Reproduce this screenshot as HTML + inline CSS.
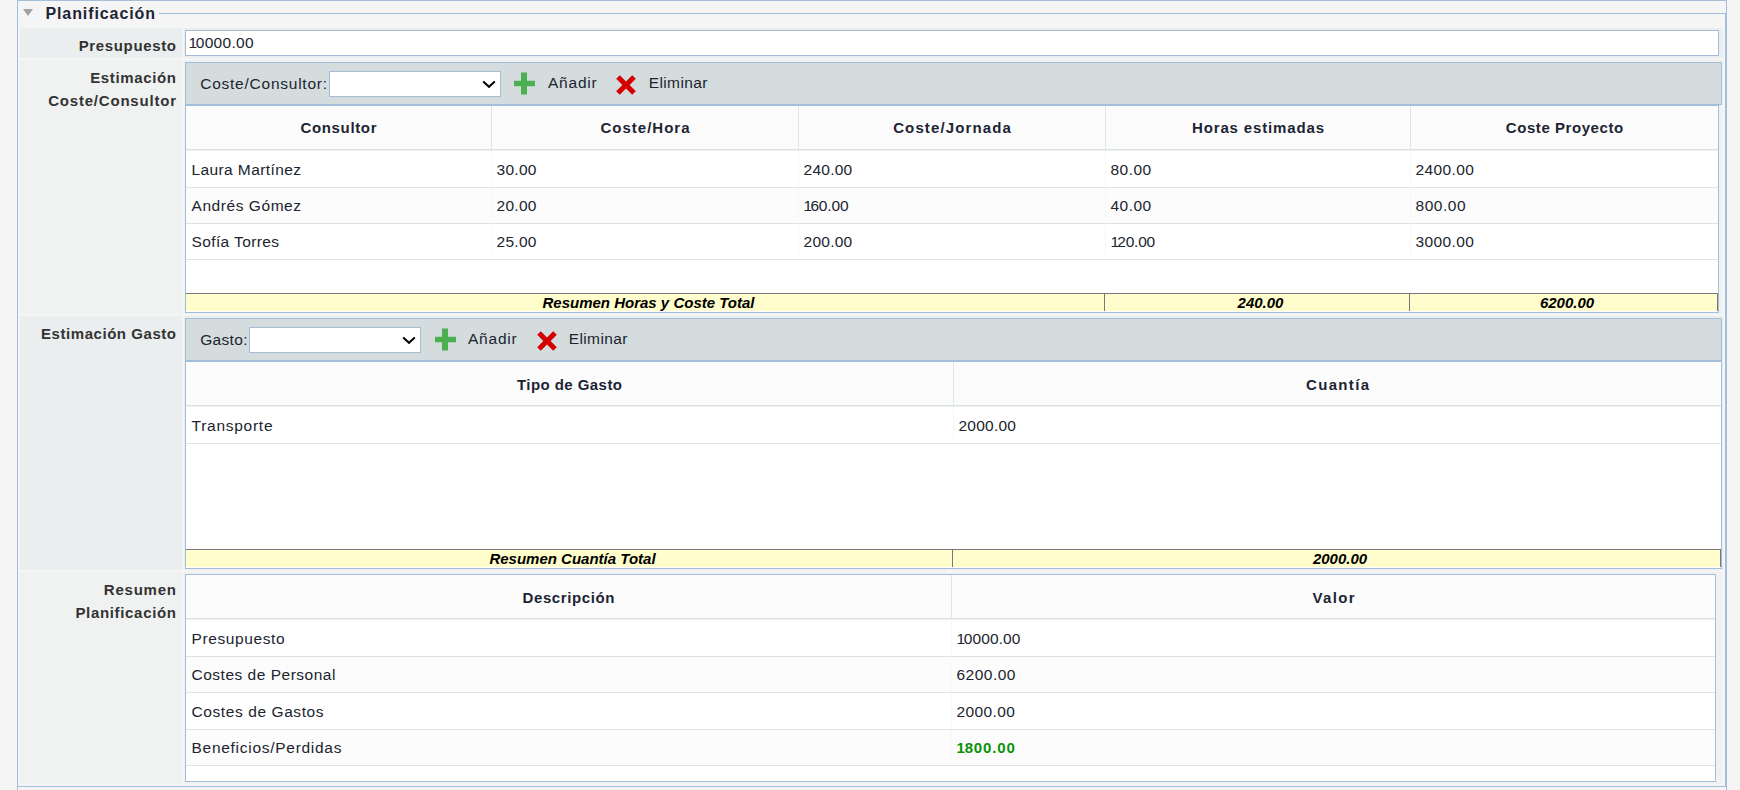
<!DOCTYPE html>
<html lang="es"><head><meta charset="utf-8"><title>Planificación</title>
<style>
html,body{margin:0;padding:0}
body{width:1740px;height:790px;overflow:hidden;position:relative;background:#f5f5f5;font:15.5px/20px 'Liberation Sans', sans-serif;color:#20242e}
*{box-sizing:border-box}
.outer{position:absolute;left:17px;top:0;width:1710px;height:800px;border:1px solid #a4bdd8}
.fs{position:absolute;left:17px;top:13px;width:1709px;height:774px;border:1px solid #a4bdd8}
.legend{position:absolute;left:18px;top:1px;width:141px;height:26px;background:#f5f5f5;font-weight:700;font-size:16px;color:#1c2434;white-space:nowrap}
.legend .tri{position:absolute;left:5px;top:7.8px;width:0;height:0;border-left:5.2px solid transparent;border-right:5.2px solid transparent;border-top:7.5px solid #a2a2a2}
.legend .lt{position:absolute;left:27.4px;top:3.2px;line-height:20px}
.lbl,.val{position:absolute}
.lbl{font-size:15px;left:20px;width:162px;text-align:right;padding:7.4px 6px 0 0;font-weight:700;color:#333;line-height:22.7px;white-space:nowrap}
.val{left:184px;width:1539px}
.r1{top:28px;height:30px;background:#ebeeee}
.r2{top:60px;height:254px;background:#f0f2f2}
.r3{top:316px;height:254px;background:#ebeeee}
.r4{top:572px;height:212px;background:#f0f2f2}
.input{position:absolute;left:1px;top:2px;width:1534px;height:26px;border:1px solid #a4bdd8;background:#fff;padding:0 0 0 2.5px;line-height:24px;white-space:nowrap}
.tb{position:absolute;left:1px;top:2px;height:43px;border:1px solid #a4bdd8;background:#d4dcde;white-space:nowrap}
.tb > *{position:absolute}
.tb .tl{left:14.2px;top:10.6px}
.sel{top:8px;width:172px;height:26px;border:1px solid #a4bdd8;background:#fff}
.sel svg{position:absolute;right:3.6px;top:7.6px}
.grid{position:absolute;left:1px;top:45px;height:208px;border:1px solid #a4bdd8;background:#fff;overflow:hidden}
table{border-collapse:separate;border-spacing:0;table-layout:fixed}
.g{width:100%}
.g th span{position:relative;top:1px}
.g2 th span,.g3 th span{top:2px}
.g td.n{padding-left:4.5px}
.g th{font-size:15px;height:44px;background:#fcfcfc;border-bottom:1px solid #dae1e3;border-right:1px solid #dfe4e6;font-weight:700;color:#1c2434;text-align:center;padding:0 0 1.6px 0;white-space:nowrap;vertical-align:middle}
.g th:last-child,.g td:last-child{border-right:0}
.g td{height:36px;border-bottom:1px solid #dde4e6;border-right:1px solid #f6f7f7;padding:1.6px 0 0 5.5px;white-space:nowrap;vertical-align:middle}
.g tr.f td{height:38px;border-top:1px solid #eef1f2}
.g tr.alt td{background:#fcfcfc}
.g tr.h37 td{height:37px}
.sum{position:absolute;left:0;height:18px;width:100%}
.sum td{height:18px;background:#fffdcb;border-top:1px solid #777;border-left:1px solid #777;font:italic 700 15px/17px 'Liberation Sans', sans-serif;color:#000;text-align:center;padding:0 0 0 7px;white-space:nowrap}
.sum td:first-child{border-left:0}
.sum td:last-child{border-right:1px solid #777}
.green{color:#0a920a;font-weight:700;font-size:15px}
</style></head>
<body>
<div class="outer"></div>
<div class="fs"></div>
<div class="legend"><span class="tri"></span><span class="lt"><span style="letter-spacing:0.91px;margin-right:-0.91px">Planificación</span></span></div>

<div class="lbl r1"><span style="letter-spacing:0.64px;margin-right:-0.64px">Presupuesto</span></div>
<div class="val r1"><div class="input"><span style="letter-spacing:0.28px;margin-right:-0.28px"><span style="letter-spacing:-1.32px">1</span>0000.00</span></div></div>

<div class="lbl r2"><span style="letter-spacing:0.64px;margin-right:-0.64px">Estimación</span><br><span style="letter-spacing:0.79px;margin-right:-0.79px">Coste/Consultor</span></div>
<div class="val r2">
<div class="tb" style="width:1537px">
<span class="tl"><span style="letter-spacing:0.76px;margin-right:-0.76px">Coste/Consultor:</span></span>
<div class="sel" style="left:143px"><svg width="14" height="9" viewBox="0 0 14 9"><path d="M1.2 1.4 L7 6.8 L12.8 1.4" fill="none" stroke="#000" stroke-width="2"/></svg></div>
<span style="left:328px;top:9px;line-height:0"><svg width="21" height="23" viewBox="0 0 21 23"><path d="M7 .4h6v8.300h8v5.600h-8V22.400H7v-8.100H0V8.700h7z" fill="#4caf50"/></svg></span>
<span style="left:362px;top:9.8px"><span style="letter-spacing:0.78px;margin-right:-0.78px">Añadir</span></span>
<span style="left:430px;top:12px;line-height:0"><svg width="20" height="20" viewBox="0 0 21 21"><path d="M4 .2 10.500 6.700 17 .2 20.800 4 14.300 10.500 20.800 17 17 20.800 10.500 14.300 4 20.800 .2 17 6.700 10.500 .2 4Z" fill="#d60000"/></svg></span>
<span style="left:462.7px;top:9.8px"><span style="letter-spacing:0.40px;margin-right:-0.40px">Eliminar</span></span>
</div>
<div class="grid" style="width:1534px">
<table class="g"><colgroup><col style="width:306px"><col style="width:307px"><col style="width:307px"><col style="width:305px"><col style="width:307px"></colgroup>
<tr><th><span style="letter-spacing:0.65px;margin-right:-0.65px">Consultor</span></th><th><span style="letter-spacing:1.00px;margin-right:-1.00px">Coste/Hora</span></th><th><span style="letter-spacing:1.12px;margin-right:-1.12px">Coste/Jornada</span></th><th><span style="letter-spacing:0.85px;margin-right:-0.85px">Horas estimadas</span></th><th><span style="letter-spacing:0.56px;margin-right:-0.56px">Coste Proyecto</span></th></tr>
<tr class="f"><td><span style="letter-spacing:0.40px;margin-right:-0.40px">Laura Martínez</span></td><td class="n"><span style="letter-spacing:0.30px;margin-right:-0.30px">30.00</span></td><td class="n"><span style="letter-spacing:0.26px;margin-right:-0.26px">240.00</span></td><td class="n"><span style="letter-spacing:0.48px;margin-right:-0.48px">80.00</span></td><td class="n"><span style="letter-spacing:0.38px;margin-right:-0.38px">2400.00</span></td></tr>
<tr class="alt"><td><span style="letter-spacing:0.56px;margin-right:-0.56px">Andrés Gómez</span></td><td class="n"><span style="letter-spacing:0.30px;margin-right:-0.30px">20.00</span></td><td class="n"><span style="letter-spacing:-0.16px;margin-right:0.16px"><span style="letter-spacing:-1.76px">1</span>60.00</span></td><td class="n"><span style="letter-spacing:0.48px;margin-right:-0.48px">40.00</span></td><td class="n"><span style="letter-spacing:0.52px;margin-right:-0.52px">800.00</span></td></tr>
<tr><td><span style="letter-spacing:0.38px;margin-right:-0.38px">Sofía Torres</span></td><td class="n"><span style="letter-spacing:0.30px;margin-right:-0.30px">25.00</span></td><td class="n"><span style="letter-spacing:0.26px;margin-right:-0.26px">200.00</span></td><td class="n"><span style="letter-spacing:-0.22px;margin-right:0.22px"><span style="letter-spacing:-1.82px">1</span>20.00</span></td><td class="n"><span style="letter-spacing:0.41px;margin-right:-0.41px">3000.00</span></td></tr>
</table>
<table class="sum" style="top:187px"><colgroup><col style="width:918px"><col style="width:305px"><col style="width:309px"></colgroup>
<tr><td>Resumen Horas y Coste Total</td><td>240.00</td><td>6200.00</td></tr></table>
</div>
</div>

<div class="lbl r3"><span style="letter-spacing:0.55px;margin-right:-0.55px">Estimación Gasto</span></div>
<div class="val r3">
<div class="tb" style="width:1537px">
<span class="tl"><span style="letter-spacing:0.33px;margin-right:-0.33px">Gasto:</span></span>
<div class="sel" style="left:63px"><svg width="14" height="9" viewBox="0 0 14 9"><path d="M1.2 1.4 L7 6.8 L12.8 1.4" fill="none" stroke="#000" stroke-width="2"/></svg></div>
<span style="left:249px;top:9px;line-height:0"><svg width="21" height="23" viewBox="0 0 21 23"><path d="M7 .4h6v8.300h8v5.600h-8V22.400H7v-8.100H0V8.700h7z" fill="#4caf50"/></svg></span>
<span style="left:282px;top:9.8px"><span style="letter-spacing:0.78px;margin-right:-0.78px">Añadir</span></span>
<span style="left:351px;top:12px;line-height:0"><svg width="20" height="20" viewBox="0 0 21 21"><path d="M4 .2 10.500 6.700 17 .2 20.800 4 14.300 10.500 20.800 17 17 20.800 10.500 14.300 4 20.800 .2 17 6.700 10.500 .2 4Z" fill="#d60000"/></svg></span>
<span style="left:382.7px;top:9.8px"><span style="letter-spacing:0.40px;margin-right:-0.40px">Eliminar</span></span>
</div>
<div class="grid" style="width:1537px">
<table class="g g2"><colgroup><col style="width:768px"><col style="width:767px"></colgroup>
<tr><th><span style="letter-spacing:0.44px;margin-right:-0.44px">Tipo de Gasto</span></th><th><span style="letter-spacing:1.33px;margin-right:-1.33px">Cuantía</span></th></tr>
<tr class="f"><td><span style="letter-spacing:0.74px;margin-right:-0.74px">Transporte</span></td><td class="n"><span style="letter-spacing:0.24px;margin-right:-0.24px">2000.00</span></td></tr>
</table>
<table class="sum" style="top:187px"><colgroup><col style="width:766px"><col style="width:769px"></colgroup>
<tr><td>Resumen Cuantía Total</td><td>2000.00</td></tr></table>
</div>
</div>

<div class="lbl r4"><span style="letter-spacing:0.78px;margin-right:-0.78px">Resumen</span><br><span style="letter-spacing:0.67px;margin-right:-0.67px">Planificación</span></div>
<div class="val r4">
<div class="grid" style="width:1531px;top:2px">
<table class="g g3"><colgroup><col style="width:766px"><col style="width:763px"></colgroup>
<tr><th><span style="letter-spacing:0.61px;margin-right:-0.61px">Descripción</span></th><th><span style="letter-spacing:1.33px;margin-right:-1.33px">Valor</span></th></tr>
<tr class="f"><td><span style="letter-spacing:0.60px;margin-right:-0.60px">Presupuesto</span></td><td class="n"><span style="letter-spacing:0.13px;margin-right:-0.13px"><span style="letter-spacing:-1.47px">1</span>0000.00</span></td></tr>
<tr class="alt"><td><span style="letter-spacing:0.51px;margin-right:-0.51px">Costes de Personal</span></td><td class="n"><span style="letter-spacing:0.49px;margin-right:-0.49px">6200.00</span></td></tr>
<tr class="h37"><td><span style="letter-spacing:0.59px;margin-right:-0.59px">Costes de Gastos</span></td><td class="n"><span style="letter-spacing:0.38px;margin-right:-0.38px">2000.00</span></td></tr>
<tr class="alt"><td><span style="letter-spacing:0.72px;margin-right:-0.72px">Beneficios/Perdidas</span></td><td class="n green"><span style="letter-spacing:0.84px;margin-right:-0.84px"><span style="letter-spacing:-0.16px">1</span>800.00</span></td></tr>
</table>
</div>
</div>
</body></html>
